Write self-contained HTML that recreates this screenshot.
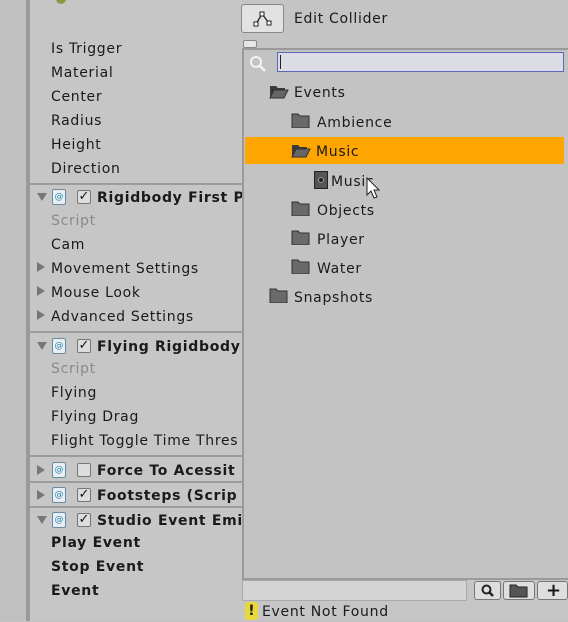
<!DOCTYPE html>
<html><head><style>
*{margin:0;padding:0;box-sizing:border-box}
body{width:568px;height:621px;overflow:hidden;background:#c2c2c2;font-family:"DejaVu Sans","Liberation Sans",sans-serif;font-size:14px;letter-spacing:0.7px;color:#1a1a1a;position:relative}
.a{position:absolute;white-space:nowrap}
.l{position:absolute;left:51px;line-height:20px;white-space:nowrap}
.sep{position:absolute;left:30px;width:212px;height:2px;background:#9c9c9c}
.tri{position:absolute;width:0;height:0}
.cs{position:absolute;width:14px;height:16px;border:1px solid #6a8aa0;background:#e8eef2;border-radius:2px;font-size:9px;letter-spacing:0;color:#2a8ab0;text-align:center;line-height:14px}
.cb{position:absolute;width:14px;height:14px;border:1px solid #777;background:#ddd;border-radius:2px;font-size:13px;letter-spacing:0;line-height:12px;text-align:center;font-weight:bold;color:#111}
.fold{position:absolute;width:20px;height:15px}
.it{position:absolute;line-height:20px}
.t{line-height:20px!important}
</style></head><body>
<div class="a" style="left:0;top:0;width:27px;height:621px;background:#c0c0c0"></div>
<div class="a" style="left:26px;top:0;width:4px;height:621px;background:#9a9a9a"></div>
<div class="a" style="left:30px;top:0;width:212px;height:621px;background:#c6c6c6"></div>
<div class="a" style="left:56px;top:-6px;width:10px;height:10px;border-radius:5px;background:#8a9a40"></div>

<div class="l" style="top:39px">Is Trigger</div>
<div class="l" style="top:63px">Material</div>
<div class="l" style="top:87px">Center</div>
<div class="l" style="top:111px">Radius</div>
<div class="l" style="top:135px">Height</div>
<div class="l" style="top:159px">Direction</div>
<div class="sep" style="top:183px"></div>

<div class="tri" style="left:37px;top:193px;border-left:5px solid transparent;border-right:5px solid transparent;border-top:8px solid #777"></div>
<div class="cs" style="left:52px;top:189px">@</div>
<div class="cb" style="left:77px;top:190px">✓</div>
<div class="a t" style="left:97px;top:188px;font-weight:bold">Rigidbody First P</div>
<div class="l" style="top:211px;color:#8a8a8a">Script</div>
<div class="l" style="top:235px">Cam</div>
<div class="tri" style="left:37px;top:262px;border-top:5px solid transparent;border-bottom:5px solid transparent;border-left:8px solid #777"></div>
<div class="l" style="top:259px">Movement Settings</div>
<div class="tri" style="left:37px;top:286px;border-top:5px solid transparent;border-bottom:5px solid transparent;border-left:8px solid #777"></div>
<div class="l" style="top:283px">Mouse Look</div>
<div class="tri" style="left:37px;top:310px;border-top:5px solid transparent;border-bottom:5px solid transparent;border-left:8px solid #777"></div>
<div class="l" style="top:307px">Advanced Settings</div>
<div class="sep" style="top:331px"></div>

<div class="tri" style="left:37px;top:342px;border-left:5px solid transparent;border-right:5px solid transparent;border-top:8px solid #777"></div>
<div class="cs" style="left:52px;top:338px">@</div>
<div class="cb" style="left:77px;top:339px">✓</div>
<div class="a t" style="left:97px;top:337px;font-weight:bold">Flying Rigidbody</div>
<div class="l" style="top:359px;color:#8a8a8a">Script</div>
<div class="l" style="top:383px">Flying</div>
<div class="l" style="top:407px">Flying Drag</div>
<div class="l" style="top:431px">Flight Toggle Time Thres</div>
<div class="sep" style="top:455px"></div>

<div class="tri" style="left:37px;top:465px;border-top:5px solid transparent;border-bottom:5px solid transparent;border-left:8px solid #777"></div>
<div class="cs" style="left:52px;top:462px">@</div>
<div class="cb" style="left:77px;top:463px"></div>
<div class="a t" style="left:97px;top:461px;font-weight:bold">Force To Acessit</div>
<div class="sep" style="top:481px"></div>
<div class="tri" style="left:37px;top:490px;border-top:5px solid transparent;border-bottom:5px solid transparent;border-left:8px solid #777"></div>
<div class="cs" style="left:52px;top:487px">@</div>
<div class="cb" style="left:77px;top:488px">✓</div>
<div class="a t" style="left:97px;top:486px;font-weight:bold">Footsteps (Scrip</div>
<div class="sep" style="top:506px"></div>
<div class="tri" style="left:37px;top:516px;border-left:5px solid transparent;border-right:5px solid transparent;border-top:8px solid #777"></div>
<div class="cs" style="left:52px;top:512px">@</div>
<div class="cb" style="left:77px;top:513px">✓</div>
<div class="a t" style="left:97px;top:511px;font-weight:bold">Studio Event Emi</div>
<div class="l" style="top:533px;font-weight:bold">Play Event</div>
<div class="l" style="top:557px;font-weight:bold">Stop Event</div>
<div class="l" style="top:581px;font-weight:bold">Event</div>

<div class="a" style="left:242px;top:0;width:326px;height:48px;background:#c4c4c4"></div>
<div class="a" style="left:241px;top:4px;width:43px;height:29px;border:1px solid #888;border-radius:3px;background:#e2e2e2"></div>
<svg class="a" style="left:253px;top:10px" width="20" height="18"><path d="M3 14 L9 4 L16 13" fill="none" stroke="#222" stroke-width="1.3"/><rect x="1" y="12" width="4" height="4" fill="#fff" stroke="#222"/><rect x="7" y="2" width="4" height="4" fill="#fff" stroke="#222"/><rect x="14" y="11" width="4" height="4" fill="#fff" stroke="#222"/></svg>
<div class="a t" style="left:294px;top:9px">Edit Collider</div>
<div class="a" style="left:243px;top:40px;width:14px;height:8px;border:1px solid #888;border-radius:2px;background:#e6e6e6"></div>

<div class="a" style="left:242px;top:48px;width:326px;height:530px;background:#c3c3c3;border-left:2px solid #9a9a9a;border-top:2px solid #9a9a9a"></div>
<svg class="a" style="left:248px;top:54px" width="20" height="20"><circle cx="8" cy="8" r="5" fill="none" stroke="#f2f2f2" stroke-width="2"/><path d="M12 12 L17 17" stroke="#f2f2f2" stroke-width="2.5"/></svg>
<div class="a" style="left:277px;top:52px;width:287px;height:20px;border:1px solid #5a6ab8;background:#dcdce4"></div>
<div class="a" style="left:280px;top:55px;width:1px;height:14px;background:#222"></div>
<div class="a" style="left:245px;top:137px;width:319px;height:27px;background:#ffa500"></div>

<svg class="fold" style="left:269px;top:84px"><path d="M1 2h6l2 2h7v3H5L1 14z" fill="#3a3a3a"/><path d="M1 14 L5 6 H19 L15 14z" fill="#666" stroke="#333"/></svg>
<div class="it" style="left:294px;top:83px">Events</div>
<svg class="fold" style="left:291px;top:113px"><path d="M1 1h6l2 2h9v12H1z" fill="#6a6a6a" stroke="#333"/></svg>
<div class="it" style="left:317px;top:113px">Ambience</div>
<svg class="fold" style="left:291px;top:143px"><path d="M1 2h6l2 2h7v3H5L1 14z" fill="#3a3a3a"/><path d="M1 14 L5 6 H19 L15 14z" fill="#666" stroke="#333"/></svg>
<div class="it" style="left:316px;top:142px">Music</div>
<div class="a" style="left:314px;top:171px;width:14px;height:18px;background:#555;border:1px solid #222"></div>
<div class="a" style="left:318px;top:177px;width:6px;height:6px;border-radius:3px;background:#222;border:1px solid #999"></div>
<div class="it" style="left:331px;top:172px">Music</div>
<svg class="a" style="left:366px;top:177px" width="16" height="26"><path d="M1 1 L1 18 L5 14 L8 21 L11 20 L8 13 L13 13z" fill="#fff" stroke="#222"/></svg>
<svg class="fold" style="left:291px;top:201px"><path d="M1 1h6l2 2h9v12H1z" fill="#6a6a6a" stroke="#333"/></svg>
<div class="it" style="left:317px;top:201px">Objects</div>
<svg class="fold" style="left:291px;top:230px"><path d="M1 1h6l2 2h9v12H1z" fill="#6a6a6a" stroke="#333"/></svg>
<div class="it" style="left:317px;top:230px">Player</div>
<svg class="fold" style="left:291px;top:259px"><path d="M1 1h6l2 2h9v12H1z" fill="#6a6a6a" stroke="#333"/></svg>
<div class="it" style="left:317px;top:259px">Water</div>
<svg class="fold" style="left:269px;top:288px"><path d="M1 1h6l2 2h9v12H1z" fill="#6a6a6a" stroke="#333"/></svg>
<div class="it" style="left:294px;top:288px">Snapshots</div>

<div class="a" style="left:242px;top:578px;width:326px;height:43px;background:#c6c6c6;border-top:2px solid #9a9a9a"></div>
<div class="a" style="left:242px;top:580px;width:225px;height:21px;background:#d4d4d4;border:1px solid #aaa"></div>
<div class="a" style="left:474px;top:581px;width:27px;height:19px;border:1px solid #777;border-radius:3px;background:#dedede"></div>
<svg class="a" style="left:480px;top:583px" width="16" height="16"><circle cx="6.5" cy="6.5" r="4" fill="none" stroke="#222" stroke-width="2"/><path d="M9.5 9.5 L13 13" stroke="#222" stroke-width="2.5"/></svg>
<div class="a" style="left:503px;top:581px;width:32px;height:19px;border:1px solid #777;border-radius:3px;background:#dedede"></div>
<svg class="a" style="left:509px;top:584px" width="20" height="14"><path d="M1 1h6l2 2h9v10H1z" fill="#555" stroke="#222"/></svg>
<div class="a" style="left:537px;top:581px;width:31px;height:19px;border:1px solid #777;border-radius:3px;background:#dedede;font-size:18px;font-weight:bold;line-height:17px;padding-left:8px">+</div>
<div class="a" style="left:245px;top:602px;width:13px;height:18px;background:#e8d83a;border-radius:3px;font-weight:bold;text-align:center;line-height:18px;letter-spacing:0">!</div>
<div class="a t" style="left:262px;top:602px">Event Not Found</div>
</body></html>
